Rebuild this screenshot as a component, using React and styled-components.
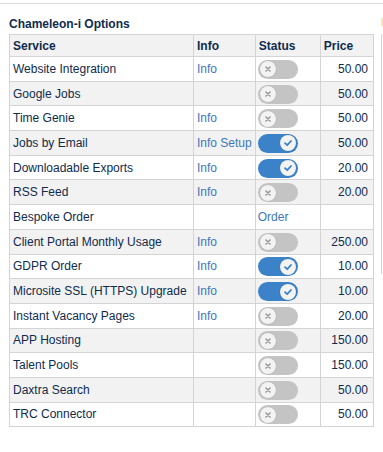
import React from "react";
import styled, { createGlobalStyle } from "styled-components";

const Global = createGlobalStyle`
  html, body { margin: 0; padding: 0; background: #fff; }
  body { font-family: "Liberation Sans", Arial, sans-serif; }
`;

const Page = styled.div`
  width: 383px;
  height: 452px;
  box-sizing: border-box;
  border-top: 1px solid #dcdcdc;
  margin-top: 3px;
  display: flex;
  overflow: hidden;
`;

const Main = styled.div`
  width: 366px;
  padding: 12px 0 0 9px;
`;

const Side = styled.div`
  flex: 1;
  display: flex;
  flex-direction: column;
  align-items: flex-end;
  padding-top: 14px;
`;

const Mark = styled.div`
  width: 2px;
  height: 8px;
  background: #fbe6b0;
`;

const SideEdge = styled.div`
  margin-top: 8px;
  margin-right: 1px;
  width: 1px;
  height: 240px;
  background: #d6d6d6;
`;

const Title = styled.h3`
  margin: 0 0 1px 0;
  font-size: 12px;
  font-weight: bold;
  color: #0f2b4d;
  line-height: 17px;
`;

const Table = styled.table`
  border-collapse: collapse;
  width: 365px;
  font-size: 12px;
  color: #0f2b4d;
  border: 1px solid #d4d4d4;
`;

const Row = styled.tr`
  background: ${(p) => (p.$alt ? "#f2f2f2" : "#fff")};
`;

const Th = styled.th`
  text-align: left;
  font-weight: bold;
  height: 22px;
  padding: 0 3px;
  border: 1px solid #d4d4d4;
  width: ${(p) => p.$w || "auto"};
  box-sizing: border-box;
`;

const Td = styled.td`
  height: 23.7px;
  padding: 0 ${(p) => (p.$right ? "5px" : "3px")} 0 ${(p) => (p.$tight ? "2px" : "3px")};
  border: 1px solid #d4d4d4;
  text-align: ${(p) => (p.$right ? "right" : "left")};
  white-space: nowrap;
  vertical-align: middle;
`;

const Link = styled.span`
  color: #3d78b8;
`;

const ToggleTrack = styled.div`
  width: 40px;
  height: 19px;
  border-radius: 10px;
  background: ${(p) => (p.$on ? "#3b82c8" : "#c4c4c4")};
  display: flex;
  align-items: center;
  justify-content: ${(p) => (p.$on ? "flex-end" : "flex-start")};
  padding: 0 2px;
  box-sizing: border-box;
  margin-top: 1px;
`;

const Knob = styled.div`
  width: 16px;
  height: 16px;
  border-radius: 50%;
  background: #f3f3f3;
  box-shadow: 0 0 1px rgba(0,0,0,0.25);
  display: flex;
  align-items: center;
  justify-content: center;
`;

function Toggle({ on }) {
  return (
    <ToggleTrack $on={on}>
      <Knob>
        {on ? (
          <svg width="10" height="10" viewBox="0 0 10 10">
            <path d="M2 5.2 L4.2 7.2 L8 3" fill="none" stroke="#3b82c8" strokeWidth="1.8" strokeLinecap="round" strokeLinejoin="round" />
          </svg>
        ) : (
          <svg width="8" height="8" viewBox="0 0 8 8">
            <path d="M2 2 L6 6 M6 2 L2 6" stroke="#9a9a9a" strokeWidth="1.6" strokeLinecap="round" />
          </svg>
        )}
      </Knob>
    </ToggleTrack>
  );
}

const rows = [
  { name: "Website Integration", info: "Info", toggle: false, price: "50.00" },
  { name: "Google Jobs", info: "", toggle: false, price: "50.00" },
  { name: "Time Genie", info: "Info", toggle: false, price: "50.00" },
  { name: "Jobs by Email", info: "Info Setup", toggle: true, price: "50.00" },
  { name: "Downloadable Exports", info: "Info", toggle: true, price: "20.00" },
  { name: "RSS Feed", info: "Info", toggle: false, price: "20.00" },
  { name: "Bespoke Order", info: "", order: true, price: "" },
  { name: "Client Portal Monthly Usage", info: "Info", toggle: false, price: "250.00" },
  { name: "GDPR Order", info: "Info", toggle: true, price: "10.00" },
  { name: "Microsite SSL (HTTPS) Upgrade", info: "Info", toggle: true, price: "10.00" },
  { name: "Instant Vacancy Pages", info: "Info", toggle: false, price: "20.00" },
  { name: "APP Hosting", info: "", toggle: false, price: "150.00" },
  { name: "Talent Pools", info: "", toggle: false, price: "150.00" },
  { name: "Daxtra Search", info: "", toggle: false, price: "50.00" },
  { name: "TRC Connector", info: "", toggle: false, price: "50.00" },
];

export default function App() {
  return (
    <>
      <Global />
      <Page>
        <Main>
          <Title>Chameleon-i Options</Title>
          <Table>
            <thead>
              <Row $alt>
                <Th $w="184px">Service</Th>
                <Th $w="60px">Info</Th>
                <Th $w="65px">Status</Th>
                <Th>Price</Th>
              </Row>
            </thead>
            <tbody>
              {rows.map((r, i) => (
                <Row key={r.name} $alt={i % 2 === 1}>
                  <Td>{r.name}</Td>
                  <Td>{r.info && <Link>{r.info}</Link>}</Td>
                  <Td $tight>{r.order ? <Link>Order</Link> : <Toggle on={r.toggle} />}</Td>
                  <Td $right>{r.price}</Td>
                </Row>
              ))}
            </tbody>
          </Table>
        </Main>
        <Side>
          <Mark />
          <SideEdge />
        </Side>
      </Page>
    </>
  );
}
